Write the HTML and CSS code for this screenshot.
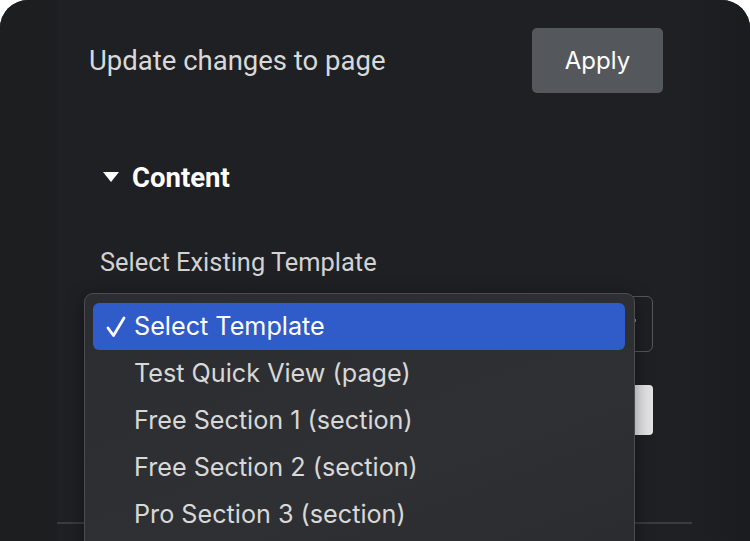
FILE: index.html
```html
<!DOCTYPE html>
<html lang="en">
<head>
    <meta charset="UTF-8">
    <title>Template panel</title>
    <link rel="stylesheet" href="styles.css">
</head>
<body>
<div class="frame">
    <div class="side"></div>
    <div class="panel">
        <div class="head">
            <span class="head-text">Update changes to page</span>
            <button class="apply">Apply</button>
        </div>
        <div class="section">
            <div class="section-title">
                <span class="caret"></span>
                <span>Content</span>
            </div>
            <div class="label">Select Existing Template</div>
            <div class="select">
                <span class="select-arrow"></span>
            </div>
            <button class="load"></button>
        </div>
        <div class="divider"></div>

        <!-- native select popup, open -->
        <ul class="menu">
            <li class="on">
                <svg class="check" width="20" height="22" viewBox="0 0 20 22">
                    <polyline points="2,12 7.5,19.5 18,2" fill="none" stroke="#fff" stroke-width="2.8" stroke-linecap="round" stroke-linejoin="round"/>
                </svg>
                Select Template
            </li>
            <li>Test Quick View (page)</li>
            <li>Free Section 1 (section)</li>
            <li>Free Section 2 (section)</li>
            <li>Pro Section 3 (section)</li>
        </ul>
    </div>
    <div class="side"></div>
</div>
</body>
</html>
```

FILE: styles.css
```css
* {
    margin: 0;
    padding: 0;
    list-style: none;
    box-sizing: border-box;
}

body {
    background: #fff;
    font-family: Roboto, "Liberation Sans", sans-serif;
}

.frame {
    width: 750px;
    height: 541px;
    display: flex;
    border-radius: 28px 28px 0 0;
    overflow: hidden;
    background: #1c1e20;
}

.side {
    width: 57px;
    flex: none;
    background: #1c1e20;
}

.side:last-child {
    width: 58px;
    background: linear-gradient(90deg, #1e1f22, #1a1c1e);
}

.panel {
    flex: 1;
    position: relative;
    background: #1f2023;
}

.head {
    display: flex;
    align-items: center;
    justify-content: space-between;
    padding: 28px 29px 0 32px;
}

.head-text {
    font-size: 27.5px;
    color: #d9d9d9;
}

.apply {
    width: 131px;
    height: 65px;
    border: 0;
    border-radius: 5px;
    background: #54575c;
    color: #fff;
    font-family: Inter, "Liberation Sans", sans-serif;
    font-size: 24px;
}

.section {
    padding: 0 39px 0 28px;
}

.section-title {
    display: flex;
    align-items: center;
    margin: 70px 0 0 18px;
    height: 28px;
    font-size: 27.5px;
    font-weight: bold;
    color: #fff;
}

.caret {
    width: 0;
    height: 0;
    border-left: 8px solid transparent;
    border-right: 8px solid transparent;
    border-top: 10px solid #fff;
    margin: 0 13px 0 0;
}

.label {
    margin: 56px 0 0 15px;
    font-size: 25.4px;
    color: #d2d2d2;
    height: 28px;
}

.select {
    margin-top: 21px;
    height: 56px;
    border: 1px solid #55575b;
    border-radius: 6px;
    position: relative;
}

.select-arrow {
    position: absolute;
    right: 16px;
    top: 22px;
    width: 3px;
    height: 3px;
    background: #888;
}

.load {
    display: block;
    width: 100%;
    height: 50px;
    margin-top: 33px;
    border: 0;
    border-radius: 4px;
    background: #e3e3e5;
}

.divider {
    margin-top: 87px;
    height: 2px;
    background: #3a3b3f;
}

.menu {
    position: absolute;
    left: 27px;
    top: 293px;
    width: 551px;
    height: 280px;
    padding: 9px 9px 0 8px;
    background: linear-gradient(160deg, #2c2d30, #2f3034 60%, #2a2b2e);
    border: 1px solid #4c4d51;
    border-radius: 9px;
    box-shadow: 0 4px 18px rgba(0, 0, 0, 0.4);
    font-family: Inter, "Liberation Sans", sans-serif;
    font-size: 25.2px;
    color: #d8d8d8;
}

.menu li {
    height: 47px;
    line-height: 46px;
    padding-left: 41px;
    position: relative;
    border-radius: 6px;
}

.menu .on {
    background: #2f5cc8;
    color: #fff;
}

.check {
    position: absolute;
    left: 13px;
    top: 13px;
}
```
